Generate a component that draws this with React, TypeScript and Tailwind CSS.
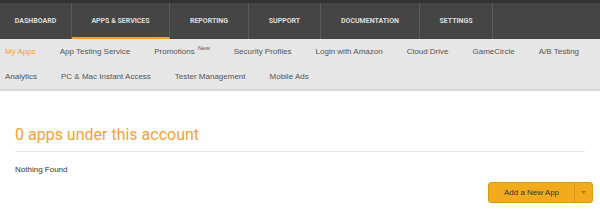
import React from 'react';

const tabs = [
  { label: 'DASHBOARD', w: 'w-[72px]' },
  { label: 'APPS & SERVICES', w: 'w-[98px]', active: true },
  { label: 'REPORTING', w: 'w-[79px]' },
  { label: 'SUPPORT', w: 'w-[72px]' },
  { label: 'DOCUMENTATION', w: 'w-[99px]' },
  { label: 'SETTINGS', w: 'w-[73px]' },
];

const rowOne = ['My Apps', 'App Testing Service', 'Promotions', 'Security Profiles', 'Login with Amazon', 'Cloud Drive', 'GameCircle', 'A/B Testing'];
const rowTwo = ['Analytics', 'PC & Mac Instant Access', 'Tester Management', 'Mobile Ads'];

const App: React.FC = () => {
  return (
    <div className="w-full h-[209px] overflow-hidden bg-white">
      {/* top nav */}
      <div className="h-[3px] bg-[#333333]" />
      <div className="flex h-[36px] bg-[#454545] font-['Roboto',sans-serif]">
        {tabs.map((t) => (
          <div
            key={t.label}
            className={`${t.w} flex items-center justify-center border-r border-[#5a5a5a] text-[7px] font-bold text-[#dedede] ${
              t.active ? 'border-b-2 border-b-[#f7a12c] pt-[2px]' : ''
            }`}
          >
            {t.label}
          </div>
        ))}
      </div>

      {/* sub nav */}
      <div className="bg-[#e6e6e6] border-b-2 border-[#d7d7d7] pl-[5px] font-['Liberation_Sans',Arial,sans-serif] text-[8px] text-[#555555]">
        <div className="flex h-[25px] items-center gap-6">
          {rowOne.map((item) => (
            <span key={item} className={item === 'My Apps' ? 'text-[#f7a133]' : ''}>
              {item}
              {item === 'Promotions' && <sup className="ml-[3px] text-[6px] -top-[4px]">New</sup>}
            </span>
          ))}
        </div>
        <div className="flex h-[25px] items-center gap-6">
          {rowTwo.map((item) => (
            <span key={item}>{item}</span>
          ))}
        </div>
      </div>

      {/* content */}
      <div className="pl-[15px] pr-[15px]">
        <h1 className="mt-[34px] pb-[6px] border-b border-[#e6e6e6] font-['Roboto',sans-serif] text-[16px] leading-[20px] text-[#f7a133]">
          0 apps under this account
        </h1>
        <p className="mt-[12px] font-['Liberation_Sans',Arial,sans-serif] text-[8px] leading-[12px] text-[#333333]">
          Nothing Found
        </p>
      </div>
      <div className="flex justify-end pr-[7px] mt-[6px]">
        <div className="flex h-[21px] rounded-[3px] border border-[#d99816] bg-[#f2ab1d] font-['Liberation_Sans',Arial,sans-serif] text-[8px] text-[#333333]">
          <div className="w-[85px] flex items-center justify-center">Add a New App</div>
          <div className="w-[18px] flex items-center justify-center border-l border-[#d99816]">
            <svg width="5" height="3" viewBox="0 0 5 3">
              <path d="M0 0 L5 0 L2.5 3 Z" fill="#b77d10" />
            </svg>
          </div>
        </div>
      </div>
    </div>
  );
};

export default App;
